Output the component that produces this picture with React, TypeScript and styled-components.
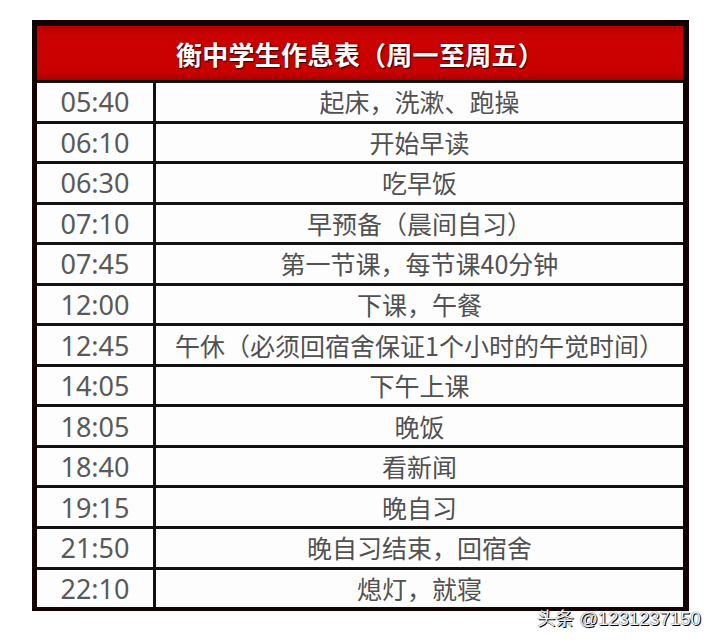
import styled, { createGlobalStyle } from 'styled-components'

const GlobalStyle = createGlobalStyle`
  html, body {
    margin: 0;
    padding: 0;
    background: #ffffff;
  }
  body {
    font-family: "Noto Sans", "Noto Sans CJK SC", sans-serif;
  }
`

const Page = styled.div`
  position: relative;
  width: 720px;
  height: 644px;
  padding: 20px 0 0 32px;
  box-sizing: border-box;
`

const Table = styled.div`
  width: 657px;
  box-sizing: border-box;
  border-style: solid;
  border-color: #120202;
  border-width: 6px 6px 4px 5px;
  background: #fdfdfd;
`

const Header = styled.div`
  height: 54px;
  display: flex;
  align-items: center;
  justify-content: center;
  background: linear-gradient(#b80000, #cb0202 20%, #c90000 85%, #a80000);
  color: #ffffff;
  font-family: "Noto Sans CJK SC", sans-serif;
  font-weight: 700;
  font-size: 26px;
  letter-spacing: 0.3px;
  text-shadow: 1px 1px 1px #3a0000, 0 0 2px #5a0000;
`

const Row = styled.div`
  display: grid;
  grid-template-columns: 119px 1fr;
  height: 40.55px;
  box-sizing: border-box;
  border-top: 3px solid #111111;
`

const Time = styled.div`
  display: flex;
  align-items: center;
  justify-content: center;
  border-right: 3px solid #111111;
  color: #595959;
  font-family: "Noto Sans", sans-serif;
  font-size: 27px;
  line-height: 1;
`

const Activity = styled.div`
  display: flex;
  align-items: center;
  justify-content: center;
  color: #515151;
  font-family: "Noto Sans CJK SC", sans-serif;
  font-size: 25px;
  line-height: 1;
  white-space: nowrap;
`

const Watermark = styled.div`
  position: absolute;
  left: 537px;
  top: 604px;
  color: #f2f2f2;
  font-family: "Liberation Sans", "Noto Sans CJK SC", sans-serif;
  font-size: 18.5px;
  text-shadow: 1px 1px 0 #000000, 0 0 1px #222222;
`

const schedule: [string, string][] = [
  ['05:40', '起床，洗漱、跑操'],
  ['06:10', '开始早读'],
  ['06:30', '吃早饭'],
  ['07:10', '早预备（晨间自习）'],
  ['07:45', '第一节课，每节课40分钟'],
  ['12:00', '下课，午餐'],
  ['12:45', '午休（必须回宿舍保证1个小时的午觉时间）'],
  ['14:05', '下午上课'],
  ['18:05', '晚饭'],
  ['18:40', '看新闻'],
  ['19:15', '晚自习'],
  ['21:50', '晚自习结束，回宿舍'],
  ['22:10', '熄灯，就寝'],
]

export default function App() {
  return (
    <Page>
      <GlobalStyle />
      <Table>
        <Header>衡中学生作息表（周一至周五）</Header>
        {schedule.map(([time, activity]) => (
          <Row key={time}>
            <Time>{time}</Time>
            <Activity>{activity}</Activity>
          </Row>
        ))}
      </Table>
      <Watermark>头条 @1231237150</Watermark>
    </Page>
  )
}
